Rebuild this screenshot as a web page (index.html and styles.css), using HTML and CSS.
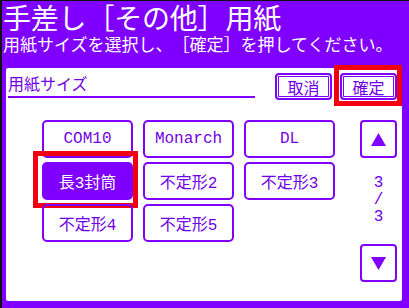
FILE: index.html
```html
<!DOCTYPE html>
<html lang="ja">
<head>
  <meta charset="UTF-8">
  <meta name="viewport" content="width=device-width, initial-scale=1.0">
  <title>手差し[その他]用紙</title>
  <link rel="stylesheet" href="styles.css">
</head>
<body>
  <div class="screen">
    <!-- ヘッダー -->
    <div class="header">
      <h1 class="title">手差し［その他］用紙</h1>
      <p class="subtitle">用紙サイズを選択し、［確定］を押してください。</p>
    </div>

    <!-- 用紙サイズ選択パネル -->
    <div class="panel">
      <div class="panel-head">
        <div class="panel-label">用紙サイズ</div>
        <div class="head-buttons">
          <div class="key">取消</div>
          <div class="key focus-ok">確定</div>
        </div>
      </div>

      <div class="panel-body">
        <div class="grid">
          <div class="size">COM10</div>
          <div class="size">Monarch</div>
          <div class="size">DL</div>
          <div class="size selected focus-size">長3封筒</div>
          <div class="size">不定形2</div>
          <div class="size">不定形3</div>
          <div class="size">不定形4</div>
          <div class="size">不定形5</div>
        </div>

        <div class="side">
          <div class="arrow">
            <svg width="15" height="13" viewBox="0 0 15 13"><polygon points="7.5,0 15,13 0,13" fill="#7f00ff"/></svg>
          </div>
          <div class="page">3<br>/<br>3</div>
          <div class="arrow arrow-down">
            <svg width="15" height="13" viewBox="0 0 15 13"><polygon points="0,0 15,0 7.5,13" fill="#7f00ff"/></svg>
          </div>
        </div>
      </div>
    </div>
  </div>
</body>
</html>
```

FILE: styles.css
```css
body {
  margin: 0;
  width: 409px;
  height: 308px;
  overflow: hidden;
  background: #7f00ff;
  font-family: "Noto Sans CJK JP", sans-serif;
  text-spacing-trim: space-all;
}
.screen {
  height: 308px;
  box-sizing: border-box;
  border-top: 1px solid #111;
  border-left: 2px solid #111;
}
.header {
  height: 65px;
  color: #fff;
  padding-left: 1px;
}
.title {
  margin: 0;
  font-size: 28px;
  line-height: 33px;
  font-weight: normal;
  letter-spacing: -0.2px;
}
.subtitle {
  margin: 0;
  font-size: 17px;
  line-height: 20px;
}
.panel {
  width: 400px;
  height: 237px;
  margin-left: 2px;
  box-sizing: border-box;
  border: 2px solid #7f00ff;
  border-radius: 4px;
  background: #fff;
  padding: 0 5px 0 2px;
  color: #7000e8;
}
.panel-head {
  display: flex;
  align-items: flex-start;
  height: 32px;
}
.panel-label {
  width: 247px;
  height: 30px;
  padding-top: 4px;
  box-sizing: border-box;
  border-bottom: 2px solid #7f00ff;
  font-size: 16px;
  line-height: 22px;
}
.head-buttons {
  display: flex;
  gap: 8px;
  margin-left: auto;
  margin-top: 5px;
}
.key {
  width: 57px;
  height: 27px;
  box-sizing: border-box;
  border: 2px solid #7f00ff;
  border-radius: 4px;
  box-shadow: inset 0 0 0 1px #fff, inset 0 0 0 2px #7f00ff;
  display: flex;
  align-items: center;
  justify-content: center;
  font-size: 16px;
  position: relative;
}
.panel-body {
  display: flex;
  margin-top: 20px;
  padding-left: 34px;
}
.grid {
  display: grid;
  grid-template-columns: repeat(3, 91px);
  grid-auto-rows: 38px;
  column-gap: 10px;
  row-gap: 4px;
}
.size {
  box-sizing: border-box;
  border: 2px solid #7f00ff;
  border-radius: 5px;
  display: flex;
  align-items: center;
  justify-content: center;
  font-family: "Liberation Mono", "Noto Sans CJK JP", monospace;
  font-size: 16px;
  position: relative;
}
.size.selected {
  background: #7f00ff;
  color: #fff;
}
.side {
  margin-left: auto;
  width: 37px;
  height: 162px;
  display: flex;
  flex-direction: column;
  align-items: center;
}
.arrow {
  width: 37px;
  height: 38px;
  box-sizing: border-box;
  border: 2px solid #7f00ff;
  border-radius: 4px;
  display: flex;
  align-items: center;
  justify-content: center;
}
.arrow-down {
  margin-top: auto;
}
.page {
  margin-top: 17px;
  font-family: "Liberation Mono", monospace;
  font-size: 16px;
  line-height: 17px;
  text-align: center;
}
/* 赤い選択枠 */
.focus-ok::after,
.focus-size::after {
  content: "";
  position: absolute;
  border: 5px solid #f00010;
  pointer-events: none;
}
.focus-ok::after {
  left: -8px;
  top: -10px;
  right: -7px;
  bottom: -8px;
}
.focus-size::after {
  left: -11px;
  top: -13px;
  right: -7px;
  bottom: -10px;
}
```
